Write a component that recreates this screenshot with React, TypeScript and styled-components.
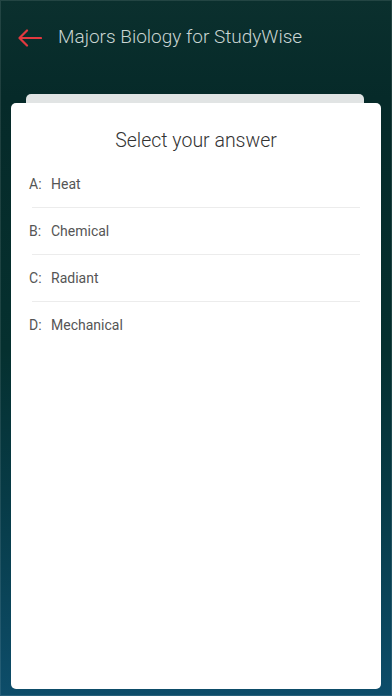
import styled, { createGlobalStyle } from "styled-components";

const GlobalStyle = createGlobalStyle`
  html, body {
    margin: 0;
    padding: 0;
  }
  body {
    font-family: Roboto, "Liberation Sans", Arial, sans-serif;
  }
`;

const answers = [
  { letter: "A", text: "Heat" },
  { letter: "B", text: "Chemical" },
  { letter: "C", text: "Radiant" },
  { letter: "D", text: "Mechanical" },
];

const App = () => {
  return (
    <Page>
      <GlobalStyle />
      <Header>
        <BackButton aria-label="back">
          <svg width="25" height="18" viewBox="0 0 25 18" fill="none">
            <path
              d="M24 9H2.5M10 1.5L2.5 9l7.5 7.5"
              stroke="#e2393f"
              strokeWidth="2.2"
              strokeLinecap="round"
              strokeLinejoin="round"
            />
          </svg>
        </BackButton>
        <Title>Majors Biology for StudyWise</Title>
      </Header>
      <Stack>
        <BackCard />
        <Card>
          <Question>Select your answer</Question>
          <List>
            {answers.map((a, i) => (
              <div key={a.letter}>
                {i > 0 && <Divider />}
                <Row>
                  <Letter>{a.letter}:</Letter>
                  <Answer>{a.text}</Answer>
                </Row>
              </div>
            ))}
          </List>
        </Card>
      </Stack>
    </Page>
  );
};

const Page = styled.div`
  width: 392px;
  height: 696px;
  display: flex;
  flex-direction: column;
  box-sizing: border-box;
  background: linear-gradient(
    180deg,
    #0b302e 0%,
    #062a29 14%,
    #05302f 50%,
    #073b47 72%,
    #0d4d6a 100%
  );
  box-shadow: inset 0 0 0 1px rgba(255, 255, 255, 0.1);
  overflow: hidden;
`;

const Header = styled.div`
  height: 94px;
  flex-shrink: 0;
  display: flex;
  align-items: flex-start;
  padding: 28px 0 0 17px;
  box-sizing: border-box;
`;

const BackButton = styled.div`
  width: 25px;
  height: 18px;
  margin-top: 1px;
  display: flex;
`;

const Title = styled.span`
  margin-left: 16px;
  margin-top: -3px;
  font-size: 19px;
  font-weight: 300;
  line-height: 24px;
  color: #c9d5d3;
`;

const Stack = styled.div`
  flex: 1;
  display: flex;
  flex-direction: column;
  padding-bottom: 7px;
`;

const BackCard = styled.div`
  height: 9px;
  flex-shrink: 0;
  margin: 0 28px 0 26px;
  background: #e1e4e4;
  border-radius: 5px 5px 0 0;
`;

const Card = styled.div`
  flex: 1;
  margin: 0 11px;
  background: #ffffff;
  border-radius: 5px;
  padding-top: 26px;
  box-sizing: border-box;
`;

const Question = styled.div`
  text-align: center;
  font-size: 19.5px;
  font-weight: 300;
  line-height: 24px;
  color: #333333;
  margin-bottom: 8px;
`;

const List = styled.div`
  display: flex;
  flex-direction: column;
`;

const Row = styled.div`
  height: 46px;
  display: flex;
  align-items: center;
  padding-left: 18px;
  font-size: 14px;
  color: #555555;
`;

const Letter = styled.span`
  width: 22px;
`;

const Answer = styled.span``;

const Divider = styled.div`
  height: 1px;
  margin: 0 21px;
  background: #ececec;
`;

export default App;
